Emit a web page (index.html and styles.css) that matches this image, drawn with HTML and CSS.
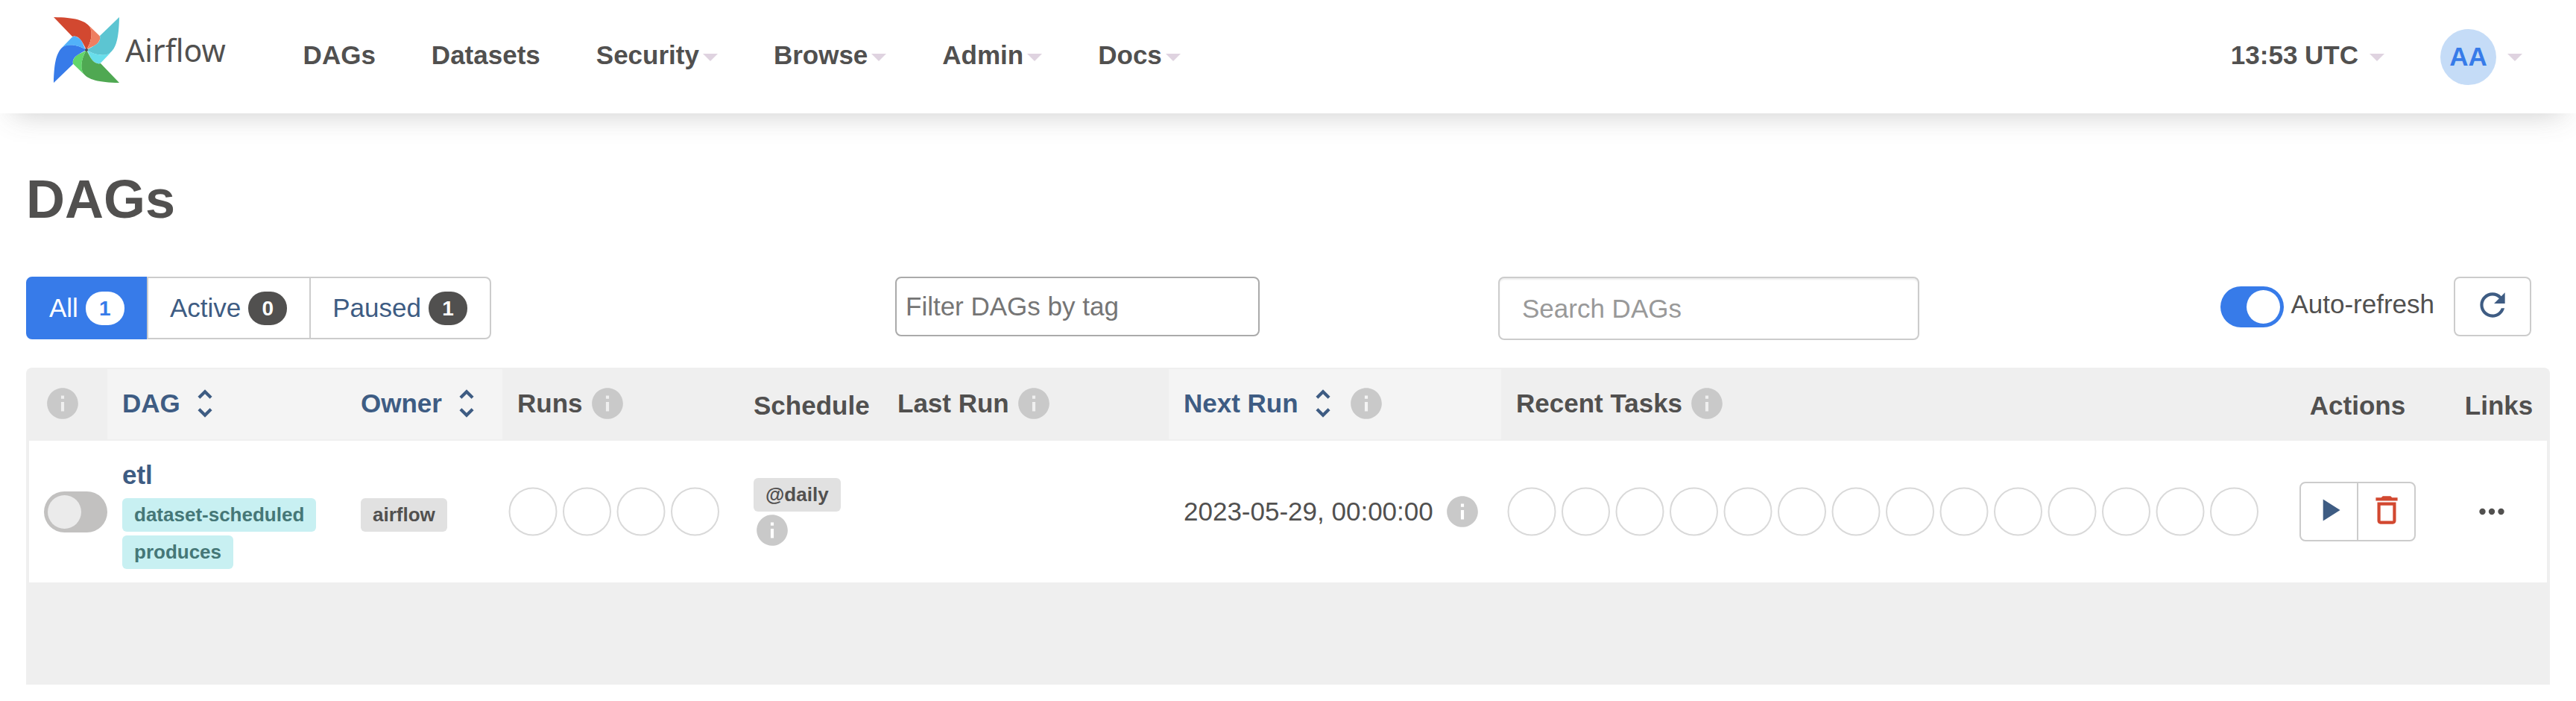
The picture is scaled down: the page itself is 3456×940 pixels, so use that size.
FILE: index.html
```html
<!DOCTYPE html>
<html lang="en">
<head>
<meta charset="utf-8">
<title>DAGs - Airflow</title>
<link rel="stylesheet" href="styles.css">
</head>
<body>
<svg class="defs" aria-hidden="true">
  <defs>
    <symbol id="info" viewBox="0 0 24 24"><path d="M12 2C6.48 2 2 6.48 2 12s4.48 10 10 10 10-4.48 10-10S17.52 2 12 2zm1 15h-2v-6h2v6zm0-8h-2V7h2v2z"/></symbol>
    <symbol id="sort" viewBox="0 0 24 24"><path d="M12 5.83L15.17 9l1.41-1.41L12 3 7.41 7.59 8.83 9 12 5.83zm0 12.34L8.83 15l-1.41 1.41L12 21l4.59-4.59L15.17 15 12 18.17z"/></symbol>
    <g id="blade-dark"><path d="M0 0C28 .5 42 4 48.7 13.3C53 22 50 34 44 44C39 35 36 26 27.5 25.6L25 26Z"/></g>
    <g id="blade-light"><path d="M48 12L61 24.5Q63.5 27 62 30C58 40 50 38.5 44 44C50 34 53 22 48 12Z"/></g>
  </defs>
</svg>

<header class="navbar">
  <a class="brand" href="#">
    <svg class="brand-mark" viewBox="0 0 88 88" aria-hidden="true">
      <use href="#blade-dark" fill="#d24830"/>
      <use href="#blade-light" fill="#ee7f61"/>
      <g transform="rotate(90 44 44)"><use href="#blade-dark" fill="#5cc5d2"/><use href="#blade-light" fill="#68deeb"/></g>
      <g transform="rotate(180 44 44)"><use href="#blade-dark" fill="#4fa852"/><use href="#blade-light" fill="#62d66b"/></g>
      <g transform="rotate(270 44 44)"><use href="#blade-dark" fill="#377be9"/><use href="#blade-light" fill="#52b1f9"/></g>
      <circle cx="44" cy="44" r="2" fill="#51504f"/>
    </svg>
    <span>Airflow</span>
  </a>
  <nav class="menu">
    <a href="#">DAGs</a>
    <a href="#">Datasets</a>
    <a href="#">Security<i class="caret"></i></a>
    <a href="#">Browse<i class="caret"></i></a>
    <a href="#">Admin<i class="caret"></i></a>
    <a href="#">Docs<i class="caret"></i></a>
  </nav>
  <div class="account">
    <a class="clock" href="#">13:53 UTC<i class="caret"></i></a>
    <a class="user" href="#"><span class="avatar">AA</span><i class="caret"></i></a>
  </div>
</header>

<main class="page">
  <h1>DAGs</h1>

  <div class="toolbar">
    <div class="status-filter">
      <a class="active" href="#">All<span class="badge">1</span></a>
      <a href="#">Active<span class="badge">0</span></a>
      <a href="#">Paused<span class="badge">1</span></a>
    </div>
    <input class="tag-filter" type="text" placeholder="Filter DAGs by tag" aria-label="Filter DAGs by tag">
    <input class="search" type="text" placeholder="Search DAGs" aria-label="Search DAGs">
    <div class="refresh">
      <input class="switch" type="checkbox" id="auto-refresh" checked>
      <label for="auto-refresh">Auto-refresh</label>
      <button class="btn" type="button" aria-label="Refresh">
        <svg class="icon" viewBox="0 0 24 24"><path d="M17.65 6.35C16.2 4.9 14.21 4 12 4c-4.42 0-7.99 3.58-7.99 8s3.57 8 7.99 8c3.73 0 6.84-2.55 7.73-6h-2.08c-.82 2.33-3.04 4-5.65 4-3.31 0-6-2.69-6-6s2.69-6 6-6c1.66 0 3.14.69 4.22 1.78L13 11h7V4l-2.35 2.35z"/></svg>
      </button>
    </div>
  </div>

  <div class="table-wrap">
    <table>
      <colgroup>
        <col class="c-toggle"><col class="c-dag"><col class="c-owner"><col class="c-runs"><col class="c-schedule">
        <col><col class="c-next"><col class="c-tasks"><col class="c-actions"><col class="c-links">
      </colgroup>
      <thead>
        <tr>
          <th><span class="head"><svg class="icon info" role="img" aria-label="Pause or unpause"><use href="#info"/></svg></span></th>
          <th class="sortable"><a class="head" href="#">DAG<svg class="icon"><use href="#sort"/></svg></a></th>
          <th class="sortable"><a class="head" href="#">Owner<svg class="icon"><use href="#sort"/></svg></a></th>
          <th><span class="head">Runs<svg class="icon info"><use href="#info"/></svg></span></th>
          <th class="plain">Schedule</th>
          <th><span class="head">Last Run<svg class="icon info"><use href="#info"/></svg></span></th>
          <th class="sortable"><a class="head" href="#">Next Run<svg class="icon"><use href="#sort"/></svg><svg class="icon info"><use href="#info"/></svg></a></th>
          <th><span class="head">Recent Tasks<svg class="icon info"><use href="#info"/></svg></span></th>
          <th class="plain centered">Actions</th>
          <th class="plain centered">Links</th>
        </tr>
      </thead>
      <tbody>
        <tr>
          <td><input class="switch" type="checkbox" aria-label="Unpause etl"></td>
          <td class="dag-cell">
            <a class="dag-name" href="#">etl</a>
            <div class="tags">
              <a class="tag teal" href="#">dataset-scheduled</a>
              <a class="tag teal" href="#">produces</a>
            </div>
          </td>
          <td class="owner-cell"><a class="tag" href="#">airflow</a></td>
          <td class="circles">
            <svg width="290" height="66" viewBox="0 0 290 66" aria-label="No runs">
              <circle cx="36" cy="33" r="31.5"/><circle cx="108.5" cy="33" r="31.5"/><circle cx="181" cy="33" r="31.5"/><circle cx="253.5" cy="33" r="31.5"/>
            </svg>
          </td>
          <td class="schedule-cell"><a class="tag" href="#">@daily</a><svg class="icon info"><use href="#info"/></svg></td>
          <td></td>
          <td><span class="date"><time>2023-05-29, 00:00:00</time><svg class="icon info"><use href="#info"/></svg></span></td>
          <td class="circles">
            <svg width="1015" height="66" viewBox="0 0 1015 66" aria-label="No recent tasks">
              <circle cx="36" cy="33" r="31.5"/><circle cx="108.5" cy="33" r="31.5"/><circle cx="181" cy="33" r="31.5"/><circle cx="253.5" cy="33" r="31.5"/><circle cx="326" cy="33" r="31.5"/><circle cx="398.5" cy="33" r="31.5"/><circle cx="471" cy="33" r="31.5"/><circle cx="543.5" cy="33" r="31.5"/><circle cx="616" cy="33" r="31.5"/><circle cx="688.5" cy="33" r="31.5"/><circle cx="761" cy="33" r="31.5"/><circle cx="833.5" cy="33" r="31.5"/><circle cx="906" cy="33" r="31.5"/><circle cx="978.5" cy="33" r="31.5"/>
            </svg>
          </td>
          <td class="centered">
            <div class="btn-group">
              <button class="btn" type="button" aria-label="Trigger DAG"><svg class="icon" viewBox="0 0 24 24"><path d="M8 5v14l11-7z"/></svg></button>
              <button class="btn danger" type="button" aria-label="Delete DAG"><svg class="icon" viewBox="0 0 24 24"><path d="M6 19c0 1.1.9 2 2 2h8c1.1 0 2-.9 2-2V7H6v12zM8 9h8v10H8V9zm7.5-5l-1-1h-5l-1 1H5v2h14V4z"/></svg></button>
            </div>
          </td>
          <td class="links-cell">
            <button class="more" type="button" aria-label="Links"><svg class="icon" viewBox="0 0 24 24"><circle cx="6" cy="12" r="2"/><circle cx="12" cy="12" r="2"/><circle cx="18" cy="12" r="2"/></svg></button>
          </td>
        </tr>
      </tbody>
    </table>
  </div>
</main>
</body>
</html>
```
FILE: styles.css
```css
* {
  box-sizing: border-box;
}

body {
  margin: 0;
  background: #fff;
  color: #51504f;
  font-family: "Liberation Sans", Arial, sans-serif;
  font-size: 35px;
  line-height: 40px;
}

a {
  color: #3e5c83;
  text-decoration: none;
}

input,
button {
  margin: 0;
  font: inherit;
}

svg {
  display: block;
  flex: none;
}

.defs {
  position: absolute;
  width: 0;
  height: 0;
}

.icon {
  width: 50px;
  height: 50px;
  fill: currentColor;
}

.info {
  color: #c9c9c9;
}

/* Top navigation */

.navbar {
  display: flex;
  align-items: center;
  height: 152px;
  padding: 0 72px;
  background: #fff;
  box-shadow: 0 18px 36px -18px rgba(81, 80, 79, 0.3);
}

.brand {
  display: flex;
  align-items: center;
  gap: 8px;
  padding-bottom: 18px;
  color: #51504f;
  font-family: "Noto Sans", sans-serif;
  font-size: 41px;
  line-height: 56px;
}

.brand-mark {
  width: 88px;
  height: 88px;
}

.menu {
  display: flex;
  gap: 75px;
  margin-left: 104px;
  padding-bottom: 4px;
}

.menu a,
.account a {
  display: flex;
  align-items: center;
  color: #51504f;
  font-weight: bold;
}

.caret {
  margin: 6px 0 0 5px;
  border: 10px solid transparent;
  border-top-color: #dfd3e0;
  border-bottom: 0;
}

.account {
  display: flex;
  align-items: center;
  gap: 75px;
  margin-left: auto;
}

.account .caret {
  margin-left: 15px;
}

.account .user .caret {
  margin-top: 2px;
}

.account .clock {
  padding-bottom: 4px;
}

.avatar {
  display: flex;
  align-items: center;
  justify-content: center;
  width: 75px;
  height: 75px;
  border-radius: 50%;
  background: #c5dcf7;
  color: #377be9;
}

/* Page */

.page {
  padding: 75px 35px 22px;
}

h1 {
  margin: 0 0 64px;
  font-size: 72px;
  line-height: 80px;
}

.toolbar {
  display: grid;
  grid-template-columns: minmax(0, 1166fr) minmax(0, 809fr) 565px minmax(0, 846fr);
  align-items: start;
  margin-bottom: 37px;
}

.status-filter {
  display: flex;
}

.status-filter a {
  display: flex;
  align-items: center;
  gap: 10px;
  height: 84px;
  margin-left: -2px;
  padding: 0 30px 0 29px;
  border: 2px solid #ccc;
}

.status-filter a:first-child {
  margin-left: 0;
  border-radius: 8px 0 0 8px;
}

.status-filter a:last-child {
  border-radius: 0 8px 8px 0;
}

.status-filter .active {
  border-color: #377be9;
  background: #377be9;
  color: #fff;
}

.badge {
  width: 52px;
  height: 45px;
  border-radius: 22px;
  background: #51504f;
  color: #fff;
  font-size: 28px;
  font-weight: bold;
  line-height: 45px;
  text-align: center;
}

.active .badge {
  background: #fff;
  color: #377be9;
}

.tag-filter,
.search {
  border-radius: 8px;
  background: #fff;
  color: #51504f;
}

.tag-filter {
  width: 489px;
  height: 80px;
  padding: 0 12px;
  border: 2px solid #aaa;
}

.tag-filter::placeholder {
  color: #757575;
}

.search {
  height: 85px;
  padding: 0 30px;
  border: 2px solid #ccc;
  box-shadow: inset 0 2px 2px rgba(0, 0, 0, 0.075);
}

.search::placeholder {
  color: #999;
}

.refresh {
  display: flex;
  align-items: center;
  justify-content: flex-end;
  padding-right: 25px;
}

.refresh label {
  margin: 0 26px 0 9px;
  padding-bottom: 6px;
}

.switch {
  display: block;
  flex: none;
  appearance: none;
  width: 85px;
  height: 55px;
  padding: 5px;
  border-radius: 28px;
  background: #c2c1c0;
}

.switch::before {
  display: block;
  width: 45px;
  height: 45px;
  border-radius: 50%;
  background: #ebebeb;
  content: "";
}

.switch:checked {
  background: #377be9;
}

.switch:checked::before {
  margin-left: auto;
  background: #fff;
}

.btn {
  display: flex;
  align-items: center;
  justify-content: center;
  width: 104px;
  height: 80px;
  padding: 0 0 4px;
  border: 2px solid #ccc;
  border-radius: 8px;
  background: #fff;
  color: #3e5c83;
}

.danger {
  color: #d24830;
}

.btn-group {
  display: inline-flex;
  vertical-align: middle;
}

.btn-group .btn {
  width: 79px;
  border-radius: 8px 0 0 8px;
}

.btn-group .btn + .btn {
  margin-left: -2px;
  border-radius: 0 8px 8px 0;
}

/* DAG table */

.table-wrap {
  min-height: 425px;
  padding: 2px 4px;
  border-radius: 8px 8px 0 0;
  background: #efefef;
}

table {
  width: 100%;
  border-collapse: separate;
  border-spacing: 0;
  table-layout: fixed;
}

.c-toggle { width: 105px; }
.c-dag { width: 320px; }
.c-owner { width: 210px; }
.c-runs { width: 317px; }
.c-schedule { width: 193px; }
.c-next { width: 446px; }
.c-tasks { width: 1024px; }
.c-actions { width: 250px; }
.c-links { width: 129px; }

th {
  height: 96px;
  padding: 0 0 2px 20px;
  border-bottom: 2px solid #efefef;
  font-weight: bold;
  text-align: left;
  white-space: nowrap;
}

th.sortable {
  background: #f4f4f4;
}

th.plain {
  padding-top: 6px;
}

.head,
.date {
  display: flex;
  align-items: center;
  gap: 8px;
}

td {
  padding: 0 0 0 20px;
  background: #fff;
}

.dag-cell {
  padding-top: 26px;
  padding-bottom: 18px;
}

.owner-cell {
  padding-top: 8px;
}

.schedule-cell {
  padding-top: 4px;
}

.date {
  gap: 14px;
  white-space: nowrap;
}

.dag-name {
  display: block;
  margin-bottom: 11px;
  font-weight: bold;
}

.tags {
  display: flex;
  flex-direction: column;
  align-items: flex-start;
  gap: 5px;
}

.tag {
  display: block;
  width: fit-content;
  padding: 0 16px;
  border-radius: 6px;
  background: #e1e1e1;
  color: #51504f;
  font-size: 26px;
  font-weight: bold;
  line-height: 45px;
}

.teal {
  background: #c8f0f2;
  color: #457777;
}

.circles {
  padding-left: 5px;
}

.circles svg {
  fill: none;
  stroke: #d9d9d9;
  stroke-width: 2px;
}

th.centered,
td.centered {
  padding-left: 0;
  text-align: center;
}

.links-cell {
  padding: 0 40px 0 20px;
}

.more {
  display: flex;
  justify-content: center;
  width: 100%;
  padding: 0;
  border: 0;
  background: none;
  color: #51504f;
}
```
